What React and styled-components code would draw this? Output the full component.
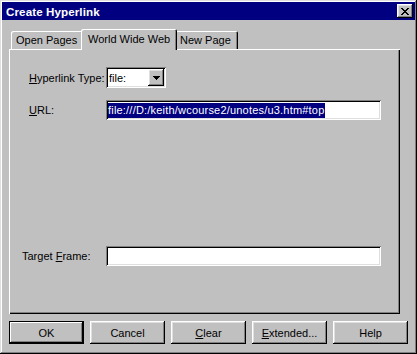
import React from 'react';
import styled, { createGlobalStyle } from 'styled-components';

const face = '#c0c0c0';
const light = '#dfdfdf';
const shadow = '#808080';
const navy = '#000080';
const uiFont = '"Liberation Sans", Arial, sans-serif';

const raised = `
  box-shadow: inset -1px -1px #000, inset 1px 1px #fff,
    inset -2px -2px ${shadow}, inset 2px 2px ${light};
`;

const sunken = `
  box-shadow: inset 1px 1px ${shadow}, inset -1px -1px #fff,
    inset 2px 2px #000, inset -2px -2px ${light};
`;

const GlobalStyle = createGlobalStyle`
  html, body {
    margin: 0;
    padding: 0;
    background: ${face};
  }
  * {
    box-sizing: border-box;
  }
`;

const Window = styled.div`
  width: 417px;
  height: 354px;
  padding: 2px;
  background: ${face};
  font-family: ${uiFont};
  font-size: 11px;
  color: #000;
  box-shadow: inset -1px -1px #000, inset 1px 1px ${light},
    inset -2px -2px ${shadow}, inset 2px 2px #fff;
`;

const TitleBar = styled.div`
  height: 18px;
  display: flex;
  align-items: center;
  justify-content: space-between;
  padding: 0 2px 0 4px;
  background: ${navy};
`;

const Title = styled.span`
  color: #fff;
  font-weight: bold;
  font-size: 11.6px;
  letter-spacing: 0.1px;
`;

const CloseButton = styled.button`
  width: 16px;
  height: 14px;
  padding: 0;
  border: 0;
  background: ${face};
  display: flex;
  align-items: center;
  justify-content: center;
  ${raised}
`;

const Content = styled.div`
  padding: 9px 0 0 7px;
`;

const TabRow = styled.div`
  display: flex;
  align-items: flex-end;
  height: 20px;
  padding-left: 2px;
  position: relative;
  z-index: 1;
`;

const Tab = styled.div`
  width: ${p => p.$width}px;
  height: ${p => (p.$active ? 21 : 18)}px;
  margin: 0 ${p => (p.$active ? -2 : 0)}px ${p => (p.$active ? -1 : 0)}px;
  padding: ${p => (p.$active ? '4px 0 0 7px' : '3px 0 0 5px')};
  background: ${face};
  border-radius: 2px 2px 0 0;
  font-size: 11px;
  white-space: nowrap;
  box-shadow: inset 1px 1px #fff, inset -1px 0 #000, inset -2px 0 ${shadow};
  position: relative;
  z-index: ${p => (p.$active ? 2 : 1)};
`;

const Panel = styled.div`
  width: 391px;
  height: 265px;
  display: flex;
  flex-direction: column;
  padding-top: 18px;
  box-shadow: inset 1px 1px #fff, inset -1px -1px #000,
    inset -2px -2px ${shadow};
`;

const Row = styled.div`
  display: grid;
  grid-template-columns: 97px auto;
  align-items: center;
  margin-top: ${p => p.$top}px;
`;

const Label = styled.span`
  padding-left: ${p => p.$indent}px;
  font-size: 11px;
  white-space: nowrap;
`;

const Combo = styled.div`
  width: 60px;
  height: 21px;
  background: #fff;
  display: flex;
  align-items: center;
  justify-content: space-between;
  padding: 2px 2px 2px 3px;
  font-size: 11px;
  ${sunken}
`;

const DropButton = styled.span`
  width: 16px;
  height: 17px;
  background: ${face};
  display: flex;
  align-items: center;
  justify-content: center;
  ${raised}
`;

const Field = styled.div`
  width: 275px;
  height: ${p => p.$height}px;
  background: #fff;
  display: flex;
  align-items: center;
  padding: 0 2px;
  font-size: 11px;
  ${sunken}
`;

const Selected = styled.span`
  background: ${navy};
  color: #fff;
  line-height: 15px;
  white-space: nowrap;
  letter-spacing: 0.2px;
`;

const Spacer = styled.div`
  flex: 1;
`;

const ButtonRow = styled.div`
  display: flex;
  gap: 6px;
  margin-top: 7px;
`;

const Button = styled.button`
  width: 75px;
  height: 23px;
  padding: 0;
  border: 0;
  background: ${face};
  font-family: ${uiFont};
  font-size: 11px;
  color: #000;
  box-shadow: ${p =>
    p.$default
      ? `inset -1px -1px #000, inset 1px 1px #000, inset -2px -2px #000, inset 2px 2px #fff, inset -3px -3px ${shadow}`
      : `inset -1px -1px #000, inset 1px 1px #fff, inset -2px -2px ${shadow}, inset 2px 2px ${light}`};
`;

function CloseGlyph() {
  return (
    <svg width="8" height="7" viewBox="0 0 8 7" shapeRendering="crispEdges">
      <path
        d="M0 0h2v1H0zM6 0h2v1H6zM1 1h2v1H1zM5 1h2v1H5zM2 2h4v1H2zM3 3h2v1H3zM2 4h4v1H2zM1 5h2v1H1zM5 5h2v1H5zM0 6h2v1H0zM6 6h2v1H6z"
        fill="#000"
      />
    </svg>
  );
}

function Arrow() {
  return (
    <svg width="7" height="4" viewBox="0 0 7 4" shapeRendering="crispEdges">
      <path d="M0 0h7v1H0zM1 1h5v1H1zM2 2h3v1H2zM3 3h1v1H3z" fill="#000" />
    </svg>
  );
}

const tabs = [
  { label: 'Open Pages', width: 72 },
  { label: 'World Wide Web', width: 96, active: true },
  { label: 'New Page', width: 63 },
];

export default function App() {
  return (
    <>
      <GlobalStyle />
      <Window>
        <TitleBar>
          <Title>Create Hyperlink</Title>
          <CloseButton>
            <CloseGlyph />
          </CloseButton>
        </TitleBar>
        <Content>
          <TabRow>
            {tabs.map(t => (
              <Tab key={t.label} $width={t.width} $active={t.active}>
                {t.label}
              </Tab>
            ))}
          </TabRow>
          <Panel>
            <Row $top={0}>
              <Label $indent={20}>
                <u>H</u>yperlink Type:
              </Label>
              <Combo>
                <span>file:</span>
                <DropButton>
                  <Arrow />
                </DropButton>
              </Combo>
            </Row>
            <Row $top={12}>
              <Label $indent={20}>
                <u>U</u>RL:
              </Label>
              <Field $height={20}>
                <Selected>file:///D:/keith/wcourse2/unotes/u3.htm#top</Selected>
              </Field>
            </Row>
            <Row $top={126}>
              <Label $indent={13}>
                Target <u>F</u>rame:
              </Label>
              <Field $height={20} />
            </Row>
            <Spacer />
          </Panel>
          <ButtonRow>
            <Button $default>OK</Button>
            <Button>Cancel</Button>
            <Button>
              <u>C</u>lear
            </Button>
            <Button>
              <u>E</u>xtended...
            </Button>
            <Button>Help</Button>
          </ButtonRow>
        </Content>
      </Window>
    </>
  );
}
